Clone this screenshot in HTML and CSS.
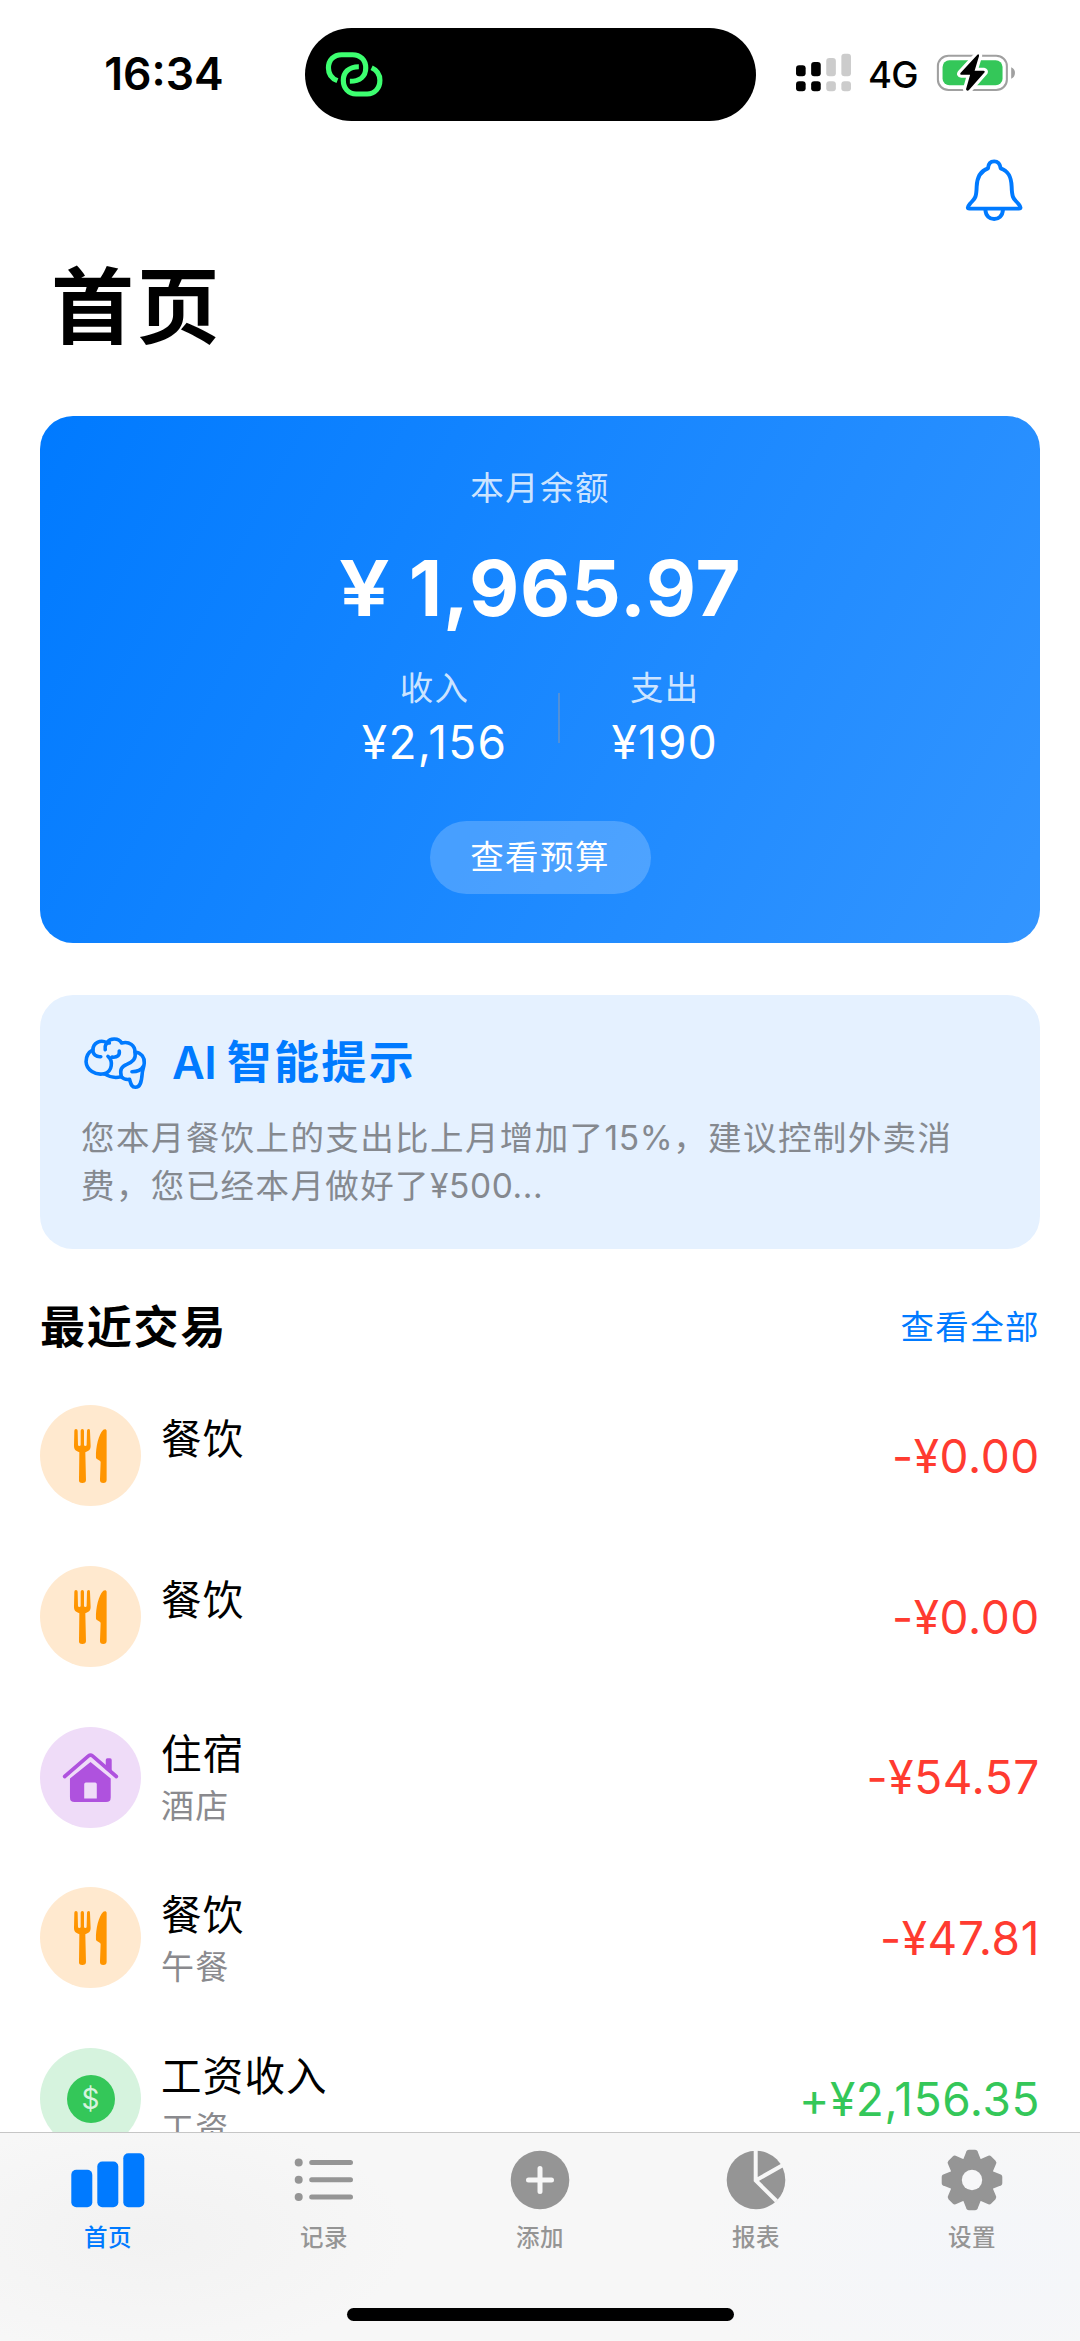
FILE: index.html
```html
<!DOCTYPE html>
<html lang="zh-CN">
<head>
<meta charset="utf-8">
<title>首页</title>
<link rel="stylesheet" href="styles.css">
</head>
<body>
<svg class="defs" width="0" height="0">
  <symbol id="cutlery" viewBox="220 144 106 168">
    <path d="M224 152Q224 147 229 147T234 152L235 194Q235 198 239 198T243 194V152Q243 147 248 147T253 152V194Q253 198 257 198T261 194L262 152Q262 147 267 147T271 152L273 198C273 210 266 213 257 217L259 300Q259 309 248 309T238 300L239 217C230 213 223 210 223 198Z"/>
    <path d="M321 152C321 147 315 146 311 149C297 163 288 200 289 232C289 240 302 240 303 246L301 300Q301 309 311 309T321 300Z"/>
  </symbol>
</svg>

<header class="status">
  <div class="time">16:34</div>
  <div class="island">
    <svg class="link" viewBox="944 153 168 140" preserveAspectRatio="none" fill="none" stroke="#3dff70" stroke-width="15">
      <path d="M980 242C962 235 954 220 954 204C954 180 970 164 992 164H1024C1046 164 1062 180 1062 204C1062 228 1046 244 1016 244"/>
      <path d="M1042 200C1012 200 997 218 997 241C997 265 1012 282 1034 282H1066C1088 282 1103 265 1103 241C1103 222 1094 210 1079 203"/>
    </svg>
  </div>
  <div class="indicators">
    <svg class="signal" viewBox="740 158 166 118" preserveAspectRatio="none">
      <g fill="#000"><rect x="743" y="195" width="28" height="33" rx="9"/><rect x="787" y="185" width="28" height="43" rx="9"/><rect x="743" y="243" width="28" height="30" rx="9"/><rect x="787" y="243" width="28" height="30" rx="9"/></g>
      <g fill="#ccc"><rect x="831" y="173" width="28" height="55" rx="9"/><rect x="875" y="160" width="28" height="68" rx="9"/><rect x="831" y="243" width="28" height="30" rx="9"/><rect x="875" y="243" width="28" height="30" rx="9"/></g>
    </svg>
    <span class="network">4G</span>
    <svg class="battery" viewBox="1150 158 232 118" preserveAspectRatio="none">
      <rect x="1155.500" y="166" width="200" height="103" rx="31" fill="none" stroke="#a0a0a0" stroke-width="6"/>
      <rect x="1169" y="180" width="174" height="75" rx="20" fill="#34c759"/>
      <path d="M1368 201Q1379 206 1379 218T1368 235Z" fill="#a0a0a0"/>
      <path d="M1270 163L1221 218Q1218 223 1223 223H1249L1237 267Q1239 274 1245 270L1291 216Q1293 212 1288 211H1262L1275 166Q1274 160 1270 163Z" fill="#000" stroke="#fff" stroke-width="18" paint-order="stroke" stroke-linejoin="round"/>
    </svg>
  </div>
</header>

<nav class="toolbar">
  <svg class="bell" viewBox="1234 474 172 194" preserveAspectRatio="none" fill="none" stroke="#007aff" stroke-width="11.500" stroke-linejoin="round">
    <path d="M1301 505C1302 490 1310 484 1319 484S1336 490 1338 505C1361 513 1369 530 1370 560C1371 599 1378 597 1390 612C1398 622 1397 626 1391 626H1247C1241 626 1240 622 1248 612C1260 597 1267 599 1268 560C1269 530 1278 513 1301 505Z"/>
    <path d="M1293.500 630C1295 666 1343 666 1344.500 630"/>
  </svg>
</nav>

<h1 class="title">首页</h1>

<section class="balance">
  <div class="caption">本月余额</div>
  <div class="total"><span class="yen">¥</span> 1,965.97</div>
  <div class="stats">
    <div class="stat"><div class="caption">收入</div><div class="value">¥2,156</div></div>
    <div class="divider"></div>
    <div class="stat"><div class="caption">支出</div><div class="value">¥190</div></div>
  </div>
  <div class="budget">查看预算</div>
</section>

<section class="tip">
  <div class="tip-head">
    <svg class="brain" viewBox="243 202 184 158" preserveAspectRatio="none" fill="none" stroke="#007aff" stroke-width="10.500" stroke-linecap="round" stroke-linejoin="round">
      <path d="M269 240C270 220 290 209 310 219C320 204 344 205 353 220C376 214 392 228 392 247C412 250 420 264 419 280C418 295 414 298 413 312C411 338 407 353 393 353C381 353 380 342 376 329C364 331 357 327 352 321C335 326 318 323 302 312C276 318 250 301 249 276C249 258 258 246 269 240Z"/>
      <path d="M269 240C268 255 279 262 292 261M305 240C303 226 308 219 317 220M313 260C328 272 327 306 302 312M325 262C340 264 348 257 346 244M392 247C396 268 385 276 368 284C352 291 347 300 352 321M383 306C400 306 411 300 416 290"/>
    </svg>
    <h2 class="tip-title"><span class="latin">AI </span>智能提示</h2>
  </div>
  <p class="tip-text">您本月餐饮上的支出比上月增加了<span class="num">15%</span>，建议控制外卖消<br>费，您已经本月做好了<span class="num">¥500...</span></p>
</section>

<div class="section-head">
  <h2 class="section-title">最近交易</h2>
  <a class="more">查看全部</a>
</div>

<main class="list">
  <div class="row">
    <div class="badge orange"><svg class="cutlery"><use href="#cutlery"/></svg></div>
    <div class="info"><div class="name">餐饮</div><div class="note blank"></div></div>
    <div class="amount">-¥0.00</div>
  </div>
  <div class="row">
    <div class="badge orange"><svg class="cutlery"><use href="#cutlery"/></svg></div>
    <div class="info"><div class="name">餐饮</div><div class="note blank"></div></div>
    <div class="amount">-¥0.00</div>
  </div>
  <div class="row">
    <div class="badge purple">
      <svg class="house" viewBox="186 1116 172 152">
        <path d="M318 1168V1139Q318 1134 323 1134H331Q336 1134 336 1139V1182Z"/>
        <path d="M194 1189L266 1127Q272 1122 278 1127L350 1189" fill="none" stroke="#af52de" stroke-width="11" stroke-linecap="round"/>
        <path fill-rule="evenodd" d="M272 1145L333 1195V1252Q333 1266 319 1266H224Q210 1266 210 1252V1195ZM258 1207Q253 1207 253 1212V1255H291V1212Q291 1207 286 1207Z"/>
      </svg>
    </div>
    <div class="info"><div class="name">住宿</div><div class="note">酒店</div></div>
    <div class="amount">-¥54.57</div>
  </div>
  <div class="row">
    <div class="badge orange"><svg class="cutlery"><use href="#cutlery"/></svg></div>
    <div class="info"><div class="name">餐饮</div><div class="note">午餐</div></div>
    <div class="amount">-¥47.81</div>
  </div>
  <div class="row">
    <div class="badge green"><div class="coin">$</div></div>
    <div class="info"><div class="name">工资收入</div><div class="note">工资</div></div>
    <div class="amount income">+¥2,156.35</div>
  </div>
</main>

<footer class="tabbar">
  <div class="tabs">
    <div class="tab active">
      <svg class="tab-icon" viewBox="-40 -34 80 68"><rect x="-36.700" y="-10.300" width="21" height="37.500" rx="5"/><rect x="-10.700" y="-18.500" width="21" height="45.700" rx="5"/><rect x="15.300" y="-26.800" width="21" height="54" rx="5"/></svg>
      <span>首页</span>
    </div>
    <div class="tab">
      <svg class="tab-icon" viewBox="-40 -34 80 68"><circle cx="-25.300" cy="-17.500" r="4"/><circle cx="-25.300" cy="-.3" r="4"/><circle cx="-25.300" cy="17" r="4"/><path d="M-12.300-17.500H26.500M-12.300-.3H26.500M-12.300 17H26.500" stroke="currentColor" stroke-width="5" stroke-linecap="round"/></svg>
      <span>记录</span>
    </div>
    <div class="tab">
      <svg class="tab-icon" viewBox="-40 -34 80 68"><circle r="29.300"/><path d="M-11.500 0H11.500M0-11.500V11.500" stroke="#f7f7f7" stroke-width="5" stroke-linecap="round"/></svg>
      <span>添加</span>
    </div>
    <div class="tab">
      <svg class="tab-icon" viewBox="-40 -34 80 68"><circle r="29.300"/><path d="M-.3-30V.5L20.500 21M-.3 .5L27-15" fill="none" stroke="#f7f7f7" stroke-width="4"/></svg>
      <span>报表</span>
    </div>
    <div class="tab">
      <svg class="tab-icon" viewBox="-40 -34 80 68">
        <path id="tooth" d="M-9-20L-6-27.500Q-5.500-30.300-3-30.300H3Q5.500-30.300 6-27.500L9-20V20L6 27.500Q5.500 30.300 3 30.300H-3Q-5.500 30.300-6 27.500L-9 20Z"/><use href="#tooth" transform="rotate(45)"/><use href="#tooth" transform="rotate(90)"/><use href="#tooth" transform="rotate(135)"/>
        <circle r="22.500"/><circle r="10.200" fill="#f7f7f8"/>
      </svg>
      <span>设置</span>
    </div>
  </div>
  <div class="home-indicator"></div>
</footer>
</body>
</html>
```
FILE: styles.css
```css
* { box-sizing: border-box; margin: 0; padding: 0; }
body {
  width: 1080px; height: 2341px; overflow: hidden;
  display: flex; flex-direction: column;
  background: #fff; color: #000;
  font-family: Inter, "Noto Sans CJK SC", sans-serif;
}
svg { display: block; flex: none; }
.defs { position: absolute; }

.status { height: 154px; padding-top: 28px; display: grid; grid-template-columns: 305px 451px 324px; align-items: start; }
.time { height: 92px; line-height: 92px; padding-left: 23px; text-align: center; font-size: 44.5px; font-weight: 600; }
.island { height: 92.5px; border-radius: 47px; background: #000; padding: 23px 20px; }
.link { width: 58px; height: 46.7px; }
.indicators { height: 89px; display: flex; align-items: center; padding-left: 39px; }
.signal { width: 57px; height: 39.3px; }
.network { width: 49px; margin: 4px 19px 0 16px; font-size: 36.5px; line-height: 44px; font-weight: 500; letter-spacing: -.7px; white-space: nowrap; }
.battery { width: 80px; height: 39.3px; }

.toolbar { height: 84px; padding: 4px 56px 0 0; display: flex; justify-content: flex-end; }
.bell { width: 59px; height: 64.7px; }

.title { height: 155px; line-height: 139px; padding-left: 51px; font-size: 83px; font-weight: 700; letter-spacing: 2.5px; }

.balance {
  height: 527px; margin: 23px 40px 0; padding-top: 47px; border-radius: 33px;
  background: linear-gradient(117.8deg, #007aff, #3395ff);
  color: #fff; display: flex; flex-direction: column; align-items: center;
}
.caption { height: 50px; line-height: 50px; font-size: 33.5px; letter-spacing: 1.4px; color: rgba(255,255,255,.8); font-weight: 400; }
.total { height: 100px; margin-top: 25px; line-height: 100px; font-size: 77.5px; font-weight: 700; letter-spacing: .9px; white-space: nowrap; }
.yen { display: inline-block; width: 51px; transform: scaleX(1.16); transform-origin: left; font-weight: 600; }
.stats { display: flex; align-items: center; margin-top: 24.5px; }
.stat { display: flex; flex-direction: column; align-items: center; }
.value { height: 58px; line-height: 58px; font-size: 46px; letter-spacing: 1.3px; }
.divider { width: 2px; height: 50px; margin: 3px 51px 0; background: rgba(120,150,190,.6); }
.budget { width: 221px; height: 73px; margin-top: 50px; line-height: 73px; text-align: center; border-radius: 37px; background: rgba(255,255,255,.2); font-size: 33.5px; letter-spacing: 1.4px; }

.tip { height: 254px; margin: 51.500px 40px 0; padding: 34px 41px 0; border-radius: 33px; background: #e5f1ff; }
.tip-head { height: 70px; display: flex; align-items: center; gap: 25px; padding-left: 3px; }
.brain { width: 63px; height: 52.7px; }
.tip-title { font-size: 45px; line-height: 68px; font-weight: 600; letter-spacing: 2.3px; color: #007aff; padding-bottom: 2px; }
.latin { letter-spacing: -.6px; }
.tip-text { margin-top: 16.500px; font-size: 33.5px; line-height: 47.7px; letter-spacing: 1.4px; color: #85898f; white-space: nowrap; }
.num { letter-spacing: .6px; }

.section-head { height: 80px; margin: 39px 40px 0; display: flex; justify-content: space-between; align-items: center; line-height: 79px; }
.section-title { font-size: 45px; font-weight: 600; letter-spacing: 1.8px; }
.more { font-size: 33.5px; letter-spacing: 1.4px; color: #007aff; }

.list { flex: 1; min-height: 0; overflow: hidden; padding: 8px 40px 0; }
.row { height: 160.7px; display: flex; align-items: center; }
.badge { width: 101px; height: 101px; border-radius: 50%; display: flex; align-items: center; justify-content: center; flex: none; }
.orange { background: #ffe9cf; fill: #ff9500; }
.purple { background: #efdcf8; fill: #af52de; }
.green { background: #d6f3de; }
.cutlery { width: 35.3px; height: 56px; }
.house { width: 57px; height: 51px; }
.coin { width: 48px; height: 48px; line-height: 48px; border-radius: 50%; background: #34c759; color: #d6f3de; text-align: center; font-size: 28px; }
.info { flex: 1; padding: 2px 0 0 20px; }
.name { height: 57px; line-height: 57px; font-size: 40.5px; letter-spacing: 1.2px; }
.note { height: 47px; line-height: 47px; font-size: 33px; letter-spacing: 1.3px; color: #8a8a8e; }
.note.blank { height: 34px; }
.amount { font-size: 46px; line-height: 60px; letter-spacing: .6px; color: #ff3b30; }
.income { color: #34c759; }

.tabbar {
  height: 209px; flex: none; border-top: 1px solid #c6c6c6; display: flex; flex-direction: column; align-items: center;
  background:
    radial-gradient(ellipse 260px 120px at 150px 105px, #f2f2f2, rgba(242,242,242,0)),
    radial-gradient(ellipse 300px 140px at 980px 130px, #f4f6fa, rgba(244,246,250,0)),
    #f7f7f7;
}
.tabs { width: 100%; height: 175px; padding-top: 13px; display: grid; grid-template-columns: repeat(5, 1fr); }
.tab { display: flex; flex-direction: column; align-items: center; color: #959595; fill: currentColor; font-size: 23.5px; line-height: 48px; font-weight: 500; letter-spacing: .6px; }
.tab-icon { width: 80px; height: 68px; }
.active { color: #007aff; }
.home-indicator { width: 387px; height: 13px; border-radius: 7px; background: #000; }
```
